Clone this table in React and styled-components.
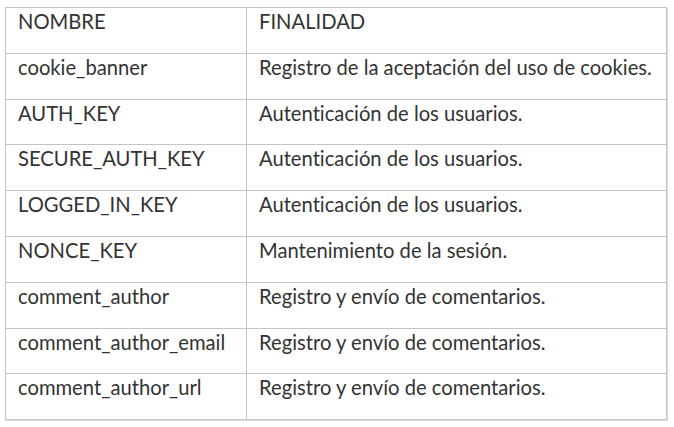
import React from 'react'
import styled, { createGlobalStyle } from 'styled-components'

const GlobalStyle = createGlobalStyle`
  body {
    margin: 0;
    background: #ffffff;
  }
`

const rows = [
  ['cookie_banner', 'Registro de la aceptación del uso de cookies.'],
  ['AUTH_KEY', 'Autenticación de los usuarios.'],
  ['SECURE_AUTH_KEY', 'Autenticación de los usuarios.'],
  ['LOGGED_IN_KEY', 'Autenticación de los usuarios.'],
  ['NONCE_KEY', 'Mantenimiento de la sesión.'],
  ['comment_author', 'Registro y envío de comentarios.'],
  ['comment_author_email', 'Registro y envío de comentarios.'],
  ['comment_author_url', 'Registro y envío de comentarios.'],
]

function App() {
  return (
    <Page>
      <GlobalStyle />
      <CookieTable>
        <colgroup>
          <col style={{ width: 241 }} />
          <col style={{ width: 420 }} />
        </colgroup>
        <tbody>
          <Row>
            <Cell>NOMBRE</Cell>
            <Cell>FINALIDAD</Cell>
          </Row>
          {rows.map(([name, purpose]) => (
            <Row key={name}>
              <Cell>{name}</Cell>
              <Cell>{purpose}</Cell>
            </Row>
          ))}
        </tbody>
      </CookieTable>
    </Page>
  )
}

const Page = styled.div`
  padding: 7px 0 0 5px;
  width: 674px;
  height: 427px;
  box-sizing: border-box;
  overflow: hidden;
`

const CookieTable = styled.table`
  border-collapse: collapse;
  table-layout: fixed;
  width: 662px;
  box-shadow: 1px 1px 0 #dcdcdc;
`

const Row = styled.tr`
  height: 45.8px;
`

const Cell = styled.td`
  border: 1px solid #c4c4c4;
  padding: 1px 6px 0 12px;
  vertical-align: top;
  font-family: Lato, "Open Sans", sans-serif;
  font-size: 20.2px;
  line-height: 24px;
  font-variant-ligatures: none;
  color: #333333;
  white-space: nowrap;
  overflow: hidden;
`

export default App
